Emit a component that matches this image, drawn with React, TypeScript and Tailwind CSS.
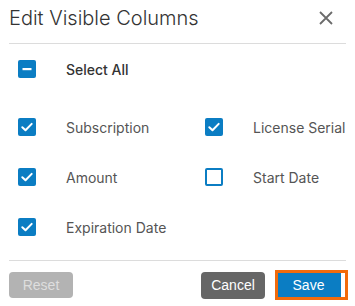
import React from 'react';

type BoxState = 'checked' | 'unchecked' | 'mixed';

const CheckBox: React.FC<{ state: BoxState }> = ({ state }) => {
  if (state === 'unchecked') {
    return <div className="w-[18px] h-[18px] rounded-[2px] border-2 border-[#0b7dc3] bg-white shrink-0"></div>;
  }
  return (
    <svg width="18" height="18" viewBox="0 0 18 18" className="shrink-0">
      <rect x="0" y="0" width="18" height="18" rx="2" fill="#0b7dc3" />
      {state === 'checked' ? (
        <path d="M4.3 9.2l3.2 3.1 6.2-6.4" fill="none" stroke="#fff" strokeWidth="2" strokeLinecap="round" strokeLinejoin="round" />
      ) : (
        <rect x="4.5" y="8" width="9" height="2.2" fill="#fff" />
      )}
    </svg>
  );
};

const Item: React.FC<{ label: string; state: BoxState }> = ({ label, state }) => (
  <div className="flex items-center h-[50px]">
    <CheckBox state={state} />
    <span className="ml-[30px] text-[14px] text-[#555]">{label}</span>
  </div>
);

export default function App() {
  return (
    <div className="w-[355px] h-[306px] bg-white" style={{ fontFamily: 'Inter, "Noto Sans", sans-serif' }}>
      {/* header */}
      <div className="flex items-center justify-between h-[43px] pl-[9px] pr-[21px] pb-[7px]">
        <h2 className="text-[20px] font-light text-[#333] leading-[28px]">Edit Visible Columns</h2>
        <svg width="16" height="16" viewBox="0 0 16 16">
          <path d="M2 2l12 12M14 2L2 14" stroke="#6b6b6b" strokeWidth="1.8" />
        </svg>
      </div>
      <div className="mx-[9px] h-px bg-[#dcdcdc]"></div>

      <div className="pl-[18px]">
        <div className="flex items-center h-[50px]">
          <CheckBox state="mixed" />
          <span className="ml-[30px] text-[14px] font-medium text-[#333]">Select All</span>
        </div>
        <div className="grid grid-cols-[187px_1fr] mt-[8px]">
          <Item label="Subscription" state="checked" />
          <Item label="License Serial" state="checked" />
          <Item label="Amount" state="checked" />
          <Item label="Start Date" state="unchecked" />
          <Item label="Expiration Date" state="checked" />
        </div>
      </div>

      <div className="mx-[9px] mt-[8px] h-px bg-[#dcdcdc]"></div>

      {/* footer */}
      <div className="flex items-center justify-between pl-[9px] pr-[7px] mt-[9px]" style={{ fontFamily: '"Liberation Sans", Arial, sans-serif' }}>
        <button className="w-[64px] h-[26px] rounded-[4px] bg-[#b3b3b3] text-[#dedede] text-[14px]">Reset</button>
        <div className="flex items-center gap-[10px]">
          <button className="w-[64px] h-[27px] rounded-[4px] bg-[#666] text-white text-[14px]">Cancel</button>
          <div className="flex border-[3px] border-[#f26b0b] bg-white pr-[4px]">
            <button className="w-[63px] h-[24px] bg-[#0b7dc3] text-white text-[14px] border-r-[2px] border-[#0b7dc3]">Save</button>
          </div>
        </div>
      </div>
    </div>
  );
}
